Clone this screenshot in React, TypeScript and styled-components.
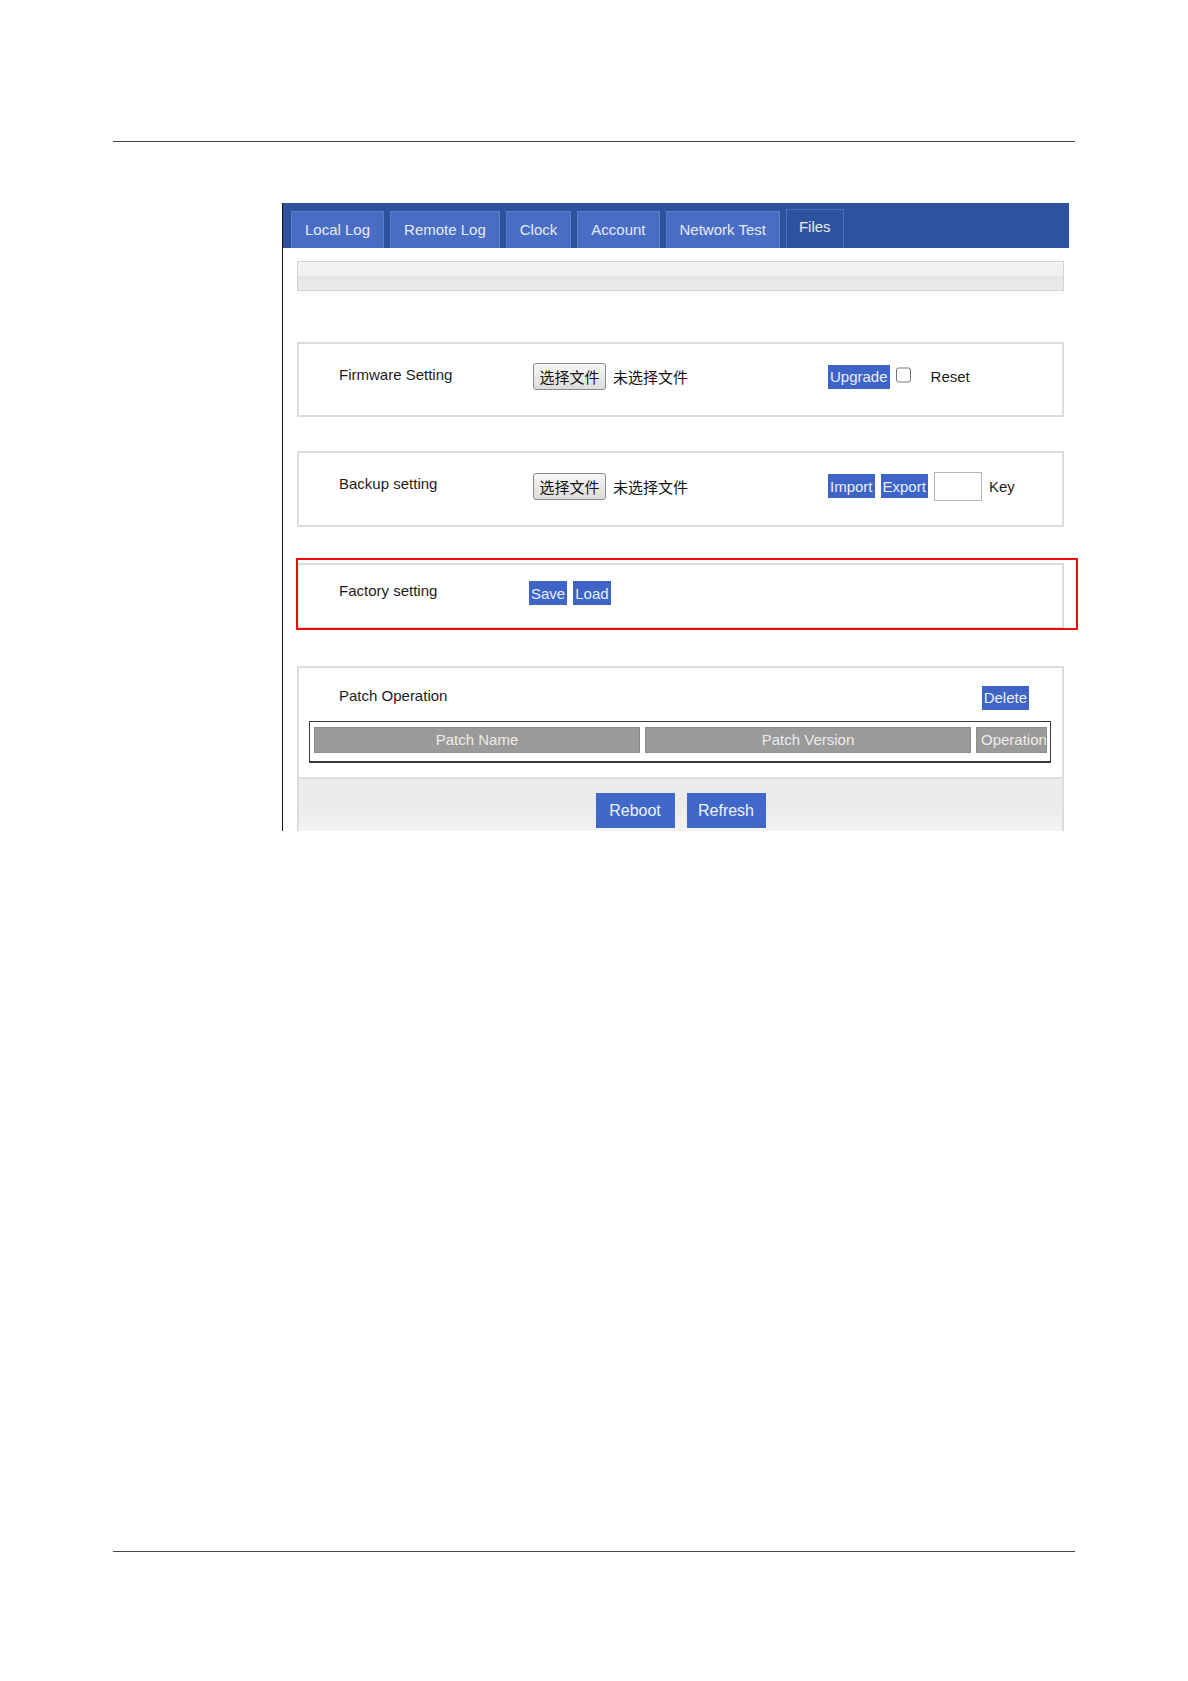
import styled, { createGlobalStyle } from "styled-components";

const GlobalStyle = createGlobalStyle`
  html, body {
    margin: 0;
    padding: 0;
    background: #ffffff;
  }
  body {
    font-family: "Liberation Sans", "Noto Sans CJK SC", sans-serif;
  }
`;

const tabs = ["Local Log", "Remote Log", "Clock", "Account", "Network Test", "Files"];
const columns = ["Patch Name", "Patch Version", "Operation"];

export default function App() {
  return (
    <>
      <GlobalStyle />
      <Page>
        <Rule />
        <Panel>
          <TabBar>
            {tabs.map((tab) => (
              <Tab key={tab} $active={tab === "Files"}>
                {tab}
              </Tab>
            ))}
          </TabBar>

          <Body>
            <StatusBar />

            <Section $height={75} $gap={51}>
              <Label>Firmware Setting</Label>
              <FilePick>
                <FileButton>选择文件</FileButton>
                <FileName>未选择文件</FileName>
              </FilePick>
              <Actions>
                <BlueButton>Upgrade</BlueButton>
                <Check type="checkbox" />
                <Caption $left={14}>Reset</Caption>
              </Actions>
            </Section>

            <Section $height={76} $gap={34}>
              <Label>Backup setting</Label>
              <FilePick>
                <FileButton>选择文件</FileButton>
                <FileName>未选择文件</FileName>
              </FilePick>
              <Actions>
                <BlueButton>Import</BlueButton>
                <BlueButton>Export</BlueButton>
                <KeyInput />
                <Caption $left={1}>Key</Caption>
              </Actions>
            </Section>

            <Section $height={66} $gap={36}>
              <Label>Factory setting</Label>
              <Actions $left={-4}>
                <BlueButton>Save</BlueButton>
                <BlueButton>Load</BlueButton>
              </Actions>
              <Highlight />
            </Section>

            <PatchBox>
              <PatchHead>
                <Label>Patch Operation</Label>
                <BlueButton>Delete</BlueButton>
              </PatchHead>
              <PatchTable>
                {columns.map((col, i) => (
                  <HeadCell key={col} $clip={i === 2}>
                    {col}
                  </HeadCell>
                ))}
              </PatchTable>
              <Footer>
                <BigButton>Reboot</BigButton>
                <BigButton>Refresh</BigButton>
              </Footer>
            </PatchBox>
          </Body>
        </Panel>
        <Rule $bottom />
      </Page>
    </>
  );
}

const Page = styled.div`
  width: 1188px;
  height: 1681px;
  box-sizing: border-box;
  padding: 141px 0 129px;
  display: flex;
  flex-direction: column;
`;

const Rule = styled.div<{ $bottom?: boolean }>`
  margin: ${(p) => (p.$bottom ? "auto 113px 0" : "0 113px")};
  height: 1px;
  flex-shrink: 0;
  background: #4a4a4a;
`;

const Panel = styled.div`
  margin: 61px 0 0 282px;
  width: 786px;
  height: 628px;
  flex-shrink: 0;
  border-left: 1px solid #111;
  background: #fff;
  display: flex;
  flex-direction: column;
`;

const TabBar = styled.div`
  height: 45px;
  flex-shrink: 0;
  background: #2f529f;
  display: flex;
  align-items: flex-end;
  gap: 6px;
  padding-left: 8px;
  box-sizing: border-box;
`;

const Tab = styled.div<{ $active?: boolean }>`
  height: ${(p) => (p.$active ? "39px" : "37px")};
  box-sizing: border-box;
  padding: ${(p) => (p.$active ? "0 12px 6px" : "0 13px 1px")};
  display: flex;
  align-items: center;
  background: ${(p) => (p.$active ? "#2f529f" : "#4a6dc4")};
  border: 1px solid ${(p) => (p.$active ? "#4e6fbf" : "#5b7ccc")};
  border-bottom: none;
  color: #e4eaf8;
  font-size: 15px;
  white-space: nowrap;
`;

const Body = styled.div`
  flex: 1;
  min-height: 0;
  padding: 13px 5px 0 14px;
  display: flex;
  flex-direction: column;
`;

const StatusBar = styled.div`
  height: 30px;
  flex-shrink: 0;
  box-sizing: border-box;
  border: 1px solid #d4d4d4;
  background: linear-gradient(#f3f3f3 0%, #f0f0f0 50%, #e6e6e6 52%, #ebebeb 100%);
`;

const Section = styled.div<{ $height: number; $gap: number }>`
  position: relative;
  flex-shrink: 0;
  margin-top: ${(p) => p.$gap}px;
  height: ${(p) => p.$height}px;
  box-sizing: border-box;
  border: 2px solid #dcdcdc;
  display: flex;
  align-items: center;
  padding: 0 0 6px 40px;
`;

const Label = styled.div`
  width: 194px;
  flex-shrink: 0;
  font-size: 15px;
  color: #1c1c1c;
  margin-top: -5px;
`;

const FilePick = styled.div`
  width: 295px;
  display: flex;
  align-items: center;
  gap: 7px;
`;

const FileButton = styled.button`
  height: 27px;
  width: 73px;
  padding: 0;
  border: 1px solid #8a8a8a;
  border-radius: 3px;
  background: linear-gradient(#f6f6f6, #dcdcdc);
  font-family: "Noto Sans CJK SC", sans-serif;
  font-size: 15px;
  color: #111;
`;

const FileName = styled.span`
  font-family: "Noto Sans CJK SC", sans-serif;
  font-size: 15px;
  color: #111;
`;

const Actions = styled.div<{ $left?: number }>`
  display: flex;
  align-items: center;
  gap: 6px;
  margin-left: ${(p) => p.$left ?? 0}px;
`;

const BlueButton = styled.button`
  height: 24px;
  padding: 0 2px;
  border: none;
  background: #3d64c6;
  color: #e9eeff;
  font-family: "Liberation Sans", sans-serif;
  font-size: 15px;
`;

const Check = styled.input`
  width: 15px;
  height: 16px;
  margin: -4px 0 0 0;
  accent-color: #999;
`;

const Caption = styled.span<{ $left: number }>`
  margin-left: ${(p) => p.$left}px;
  font-size: 15px;
  color: #1c1c1c;
`;

const KeyInput = styled.input`
  width: 48px;
  height: 29px;
  box-sizing: border-box;
  border: 1px solid #b4b4b4;
  padding: 0;
`;

const Highlight = styled.div`
  position: absolute;
  top: -7px;
  left: -3px;
  right: -16px;
  bottom: -3px;
  border: 2px solid #ee0a0a;
  pointer-events: none;
`;

const PatchBox = styled.div`
  margin-top: 37px;
  border: 2px solid #dcdcdc;
  border-bottom: none;
  flex: 1;
  min-height: 0;
  overflow: hidden;
  display: flex;
  flex-direction: column;
`;

const PatchHead = styled.div`
  height: 53px;
  flex-shrink: 0;
  display: flex;
  align-items: center;
  justify-content: space-between;
  padding: 6px 33px 0 40px;
  box-sizing: border-box;
`;

const PatchTable = styled.div`
  flex-shrink: 0;
  margin: 0 11px 0 10px;
  border: 1px solid #3a3a3a;
  border-bottom-width: 2px;
  padding: 5px 3px 8px 4px;
  display: grid;
  grid-template-columns: 326px 326px 71px;
  column-gap: 5px;
  background: #fff;
`;

const HeadCell = styled.div<{ $clip?: boolean }>`
  height: 26px;
  box-sizing: border-box;
  border: 1px solid #8c8c8c;
  background: #9a9a9a;
  color: #ececec;
  font-size: 15px;
  line-height: 24px;
  text-align: ${(p) => (p.$clip ? "left" : "center")};
  padding-left: ${(p) => (p.$clip ? "4px" : "0")};
  white-space: nowrap;
  overflow: hidden;
`;

const Footer = styled.div`
  flex: 1;
  margin-top: 14px;
  border-top: 2px solid #dedede;
  background: linear-gradient(#ececec 0%, #ebebeb 55%, #f4f4f4 100%);
  display: flex;
  align-items: flex-start;
  justify-content: center;
  gap: 12px;
  padding-top: 14px;
  box-sizing: border-box;
`;

const BigButton = styled.button`
  width: 79px;
  height: 35px;
  flex-shrink: 0;
  border: none;
  background: #3f68c9;
  color: #eef2ff;
  font-family: "Liberation Sans", sans-serif;
  font-size: 16px;
`;
